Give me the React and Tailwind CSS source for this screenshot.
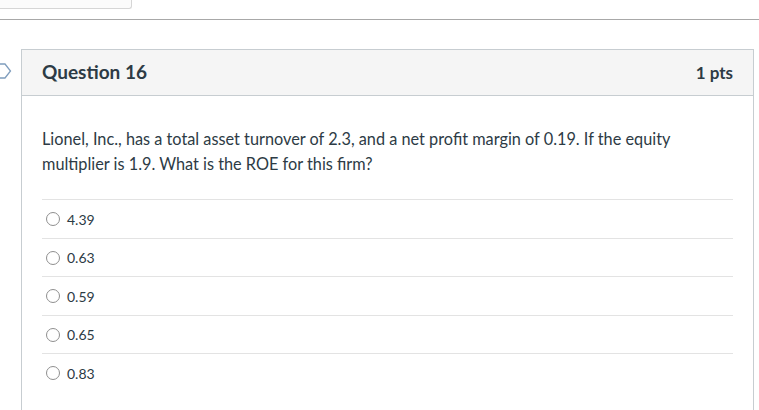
export default function App() {
  const answers = ["4.39", "0.63", "0.59", "0.65", "0.83"];
  const heights = ["h-[39px]", "h-[38px]", "h-[39px]", "h-[38px]", "h-[39px]"];
  return (
    <div className="relative w-[759px] h-[410px] overflow-hidden bg-white" style={{ fontFamily: "Lato, 'Noto Sans', sans-serif" }}>
      <div className="h-[20px] border-b border-[#a8a8a8]">
        <div className="w-[132px] h-[9px] bg-[#fbfbfb] border-r border-b border-[#d6d6d6] rounded-br-[3px]" />
      </div>
      <div className="relative mt-[29px]">
        <svg className="absolute left-0 top-[14px]" width="12" height="16" viewBox="0 0 12 16">
          <path d="M-6 1 H5 L10.5 8 L5 15 H-6" fill="none" stroke="#7f9dbd" strokeWidth="1.3" />
        </svg>
        <div className="ml-[21px] w-[733px] h-[400px] border border-[#c7cdd1]">
          <div className="h-[46px] bg-[#f5f5f5] border-b border-[#c7cdd1] px-5 flex items-center justify-between text-[#2d3b45]">
            <span className="text-[19px] font-bold">Question 16</span>
            <span className="text-[17px] font-bold">1 pts</span>
          </div>
          <div className="px-5 pt-[30px] text-[#2d3b45]">
            <p className="text-[16.3px] leading-[25px]">
              Lionel, Inc., has a total asset turnover of 2.3, and a net profit margin of 0.19. If the equity multiplier is 1.9. What is the ROE for this firm?
            </p>
            <div className="mt-[23px]">
              {answers.map((a, i) => (
                <div key={a} className={`${heights[i]} border-t border-[#e3e3e3] flex items-center pl-[4px]`}>
                  <span className="w-[14px] h-[14px] rounded-full border border-[#8f8f8f] bg-white" />
                  <span className="ml-[7px] text-[14px]">{a}</span>
                </div>
              ))}
            </div>
          </div>
        </div>
      </div>
    </div>
  );
}
